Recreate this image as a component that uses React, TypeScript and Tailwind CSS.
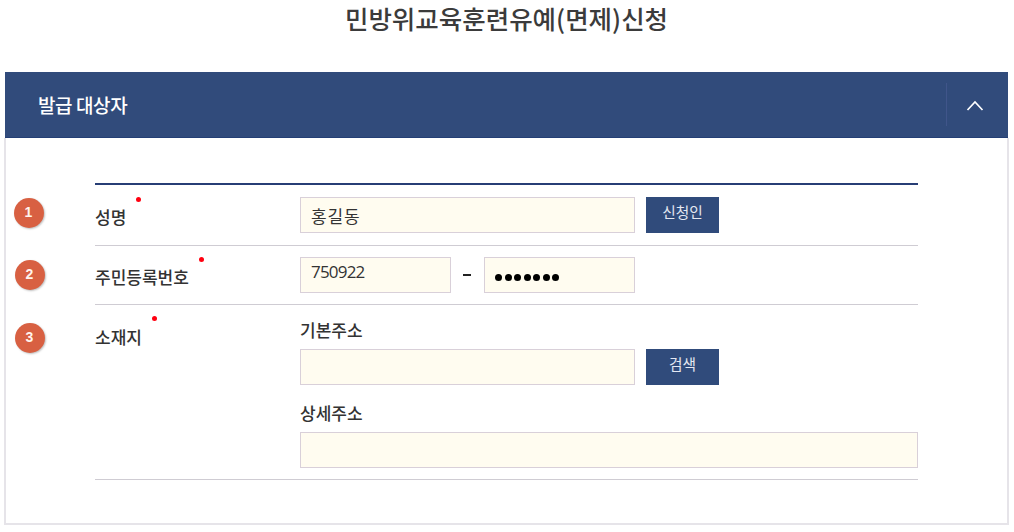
import type { ReactNode } from "react";

const sans = "font-['Noto_Sans_CJK_KR',sans-serif]";

function Badge({ n, className }: { n: number; className: string }) {
  return (
    <span
      className={`flex size-[30px] shrink-0 items-center justify-center rounded-full bg-[#d86042] pr-px pb-[2px] font-['Liberation_Sans',sans-serif] text-[14px] leading-none font-bold text-[#fff4ee] shadow-[1px_1px_2px_rgba(0,0,0,0.25)] ${className}`}
    >
      {n}
    </span>
  );
}

function Row({ n, label, badge, height, labelTop, dotTop, children }: {
  n: number;
  label: string;
  badge: string;
  height: string;
  labelTop: string;
  dotTop: string;
  children: ReactNode;
}) {
  return (
    <div className={`flex items-start ${height}`}>
      <div className="w-[88px] shrink-0">
        <Badge n={n} className={badge} />
      </div>
      <div className="flex h-full w-[823px] items-start border-b border-[#cfccd3]">
        <div className="flex w-[205px] shrink-0 items-start">
          <span className={`text-[17px] leading-[24px] font-medium whitespace-nowrap text-[#333] ${labelTop}`}>{label}</span>
          <span className={`ml-[10px] size-[5px] rounded-full bg-[#ff0010] ${dotTop}`} />
        </div>
        {children}
      </div>
    </div>
  );
}

function Field({ className, children }: { className: string; children?: ReactNode }) {
  return (
    <div className={`h-9 shrink-0 border border-[#d9d0d9] bg-[#fffcf0] pl-[10px] text-[#333] ${className}`}>
      {children}
    </div>
  );
}

function Action({ children }: { children: ReactNode }) {
  return (
    <button className="ml-[11px] flex h-9 w-[73px] shrink-0 justify-center bg-[#304b7b] pt-[5px] text-[14.7px] leading-[20px] font-normal text-[#e4e8f2]">
      {children}
    </button>
  );
}

export default function App() {
  return (
    <main className={`h-[532px] w-[1014px] overflow-hidden bg-white ${sans}`}>
      <h1 className="h-[72px] pr-px text-center text-[25.5px] leading-[36px] font-medium text-[#3b3b3b]">
        민방위교육훈련유예(면제)신청
      </h1>
      <section className="ml-[4px] w-[1005px]">
        <header className="ml-px flex h-[66px] w-[1003px] items-center border-b border-[#243f75] bg-[#314b7b] pl-[33px] text-white">
          <h2 className="grow text-[19px] leading-[30px] font-medium tracking-[-0.4px]">발급 대상자</h2>
          <div className="flex h-[43px] w-[62px] items-center border-l border-[#40558a] pl-[19px]">
            <svg width="18" height="12" viewBox="0 0 18 12" fill="none" stroke="white" strokeWidth="1.7">
              <path d="M1.5 11 9 3l7.5 8" />
            </svg>
          </div>
        </header>
        <div className="h-[387px] border-x-2 border-b-2 border-[#e6e4e9] pt-[45px]">
          <div className="ml-[89px] h-[2px] w-[823px] bg-[#273e75]" />
          <div className="ml-px">
            <Row n={1} label="성명" badge="ml-[7px] mt-[13px]" height="h-[61px]" labelTop="mt-[20px]" dotTop="mt-[12px]">
              <Field className="mt-[12px] w-[335px]">
                <span className="block pt-[7px] text-[17px] leading-[22px] font-normal tracking-[0.9px]">홍길동</span>
              </Field>
              <div className="mt-[12px]"><Action>신청인</Action></div>
            </Row>
            <Row n={2} label="주민등록번호" badge="ml-[8px] mt-[14px]" height="h-[59px]" labelTop="mt-[19px]" dotTop="mt-[11px]">
              <Field className="mt-[11px] w-[151px]">
                <span className="block pt-[3px] font-['Open_Sans',sans-serif] text-[17px] leading-[22px] font-normal tracking-[-0.8px]">750922</span>
              </Field>
              <span className="mt-[28px] ml-[12px] h-[2px] w-[8px] bg-[#222]" />
              <Field className="mt-[11px] ml-[13px] w-[151px]">
                <div className="flex gap-[2.5px] pt-[16px]">
                  {Array.from({ length: 7 }, (_, i) => (
                    <span key={i} className="size-[7px] rounded-full bg-black" />
                  ))}
                </div>
              </Field>
            </Row>
            <Row n={3} label="소재지" badge="ml-[8px] mt-[18px]" height="h-[175px]" labelTop="mt-[20px]" dotTop="mt-[11px]">
              <div className="w-[618px] pt-[13px] text-[17px] leading-[24px] font-medium text-[#333]">
                <div>기본주소</div>
                <div className="mt-[7px] flex">
                  <Field className="w-[335px]" />
                  <Action>검색</Action>
                </div>
                <div className="mt-[16px]">상세주소</div>
                <Field className="mt-[7px] w-full" />
              </div>
            </Row>
          </div>
        </div>
      </section>
    </main>
  );
}
